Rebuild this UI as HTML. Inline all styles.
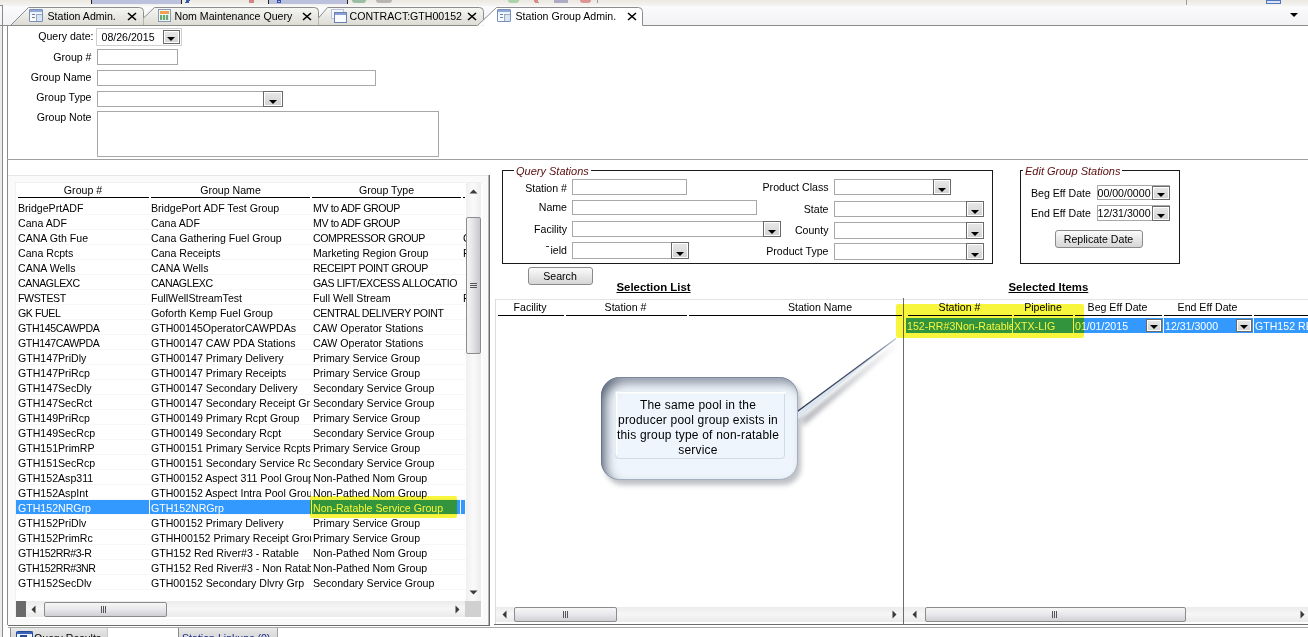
<!DOCTYPE html>
<html><head><meta charset="utf-8"><style>
html,body{margin:0;padding:0;width:1308px;height:637px;overflow:hidden;background:#ffffff;position:relative}
body div{position:absolute;box-sizing:content-box}
.t{font-family:"Liberation Sans",sans-serif;line-height:20px;white-space:nowrap;color:#000}
.inp{border:1px solid #a8a8a8;background:#fff}
.ddb{border:1px solid #6a6a6a;background:linear-gradient(#e8e8e8,#d2d2d2);box-shadow:inset 0 0 0 1px #fff}
.ddb i{position:absolute;width:0;height:0;border-left:4px solid transparent;border-right:4px solid transparent;border-top:4px solid #000}
.btn{border:1px solid #8a8a8a;border-radius:3px;background:linear-gradient(#fbfbfb,#e4e4e4 60%,#d6d6d6)}
</style></head><body>
<div style="left:0px;top:0px;width:1308px;height:6px;background:linear-gradient(#ebe8e1,#f6f5f2)"></div>
<div style="left:91px;top:0px;width:91px;height:4px;background:#bcc2de;border-left:1px solid #222;border-right:1px solid #222;box-sizing:border-box"></div>
<div style="left:184px;top:0px;width:7px;height:3px;background:linear-gradient(120deg,transparent 30%,#3a5cb0 30% 70%,transparent 70%)"></div>
<div style="left:249px;top:0px;width:5px;height:3px;background:#c03030;opacity:.8;opacity:.55"></div>
<div style="left:268px;top:0px;width:80px;height:4px;background:#bcc2de;border-left:1px solid #222;border-right:1px solid #222;box-sizing:border-box"></div>
<div style="left:277px;top:0px;width:4px;height:3px;border:1px solid #3050b0;box-sizing:border-box"></div>
<div style="left:352px;top:0px;width:14px;height:3px;background:#5a9a70;border-radius:0 0 3px 3px;opacity:.55"></div>
<div style="left:376px;top:0px;width:16px;height:3px;background:#8a8a8a;border-radius:0 0 4px 4px;opacity:.55"></div>
<div style="left:508px;top:0px;width:11px;height:3px;background:#7ac07a;border-radius:0 0 6px 6px;opacity:.55"></div>
<div style="left:531px;top:0px;width:12px;height:3px;background:linear-gradient(60deg,transparent 30%,#c04040 30% 60%,transparent 60%);opacity:.55"></div>
<div style="left:554px;top:0px;width:14px;height:3px;background:#7878a8;opacity:.55"></div>
<div style="left:580px;top:0px;width:11px;height:3px;background:#d05050;border-radius:0 0 6px 6px;opacity:.55"></div>
<div style="left:597px;top:0px;width:1px;height:3px;background:#999"></div>
<div style="left:1186px;top:0px;width:1px;height:5px;background:#999"></div>
<div style="left:1266px;top:0px;width:15px;height:4px;border:1px solid #5078c0;box-sizing:border-box;background:#d8e4f4"></div>
<div style="left:0px;top:26px;width:2px;height:611px;background:#ececec"></div>
<div style="left:0px;top:6px;width:1308px;height:19px;background:linear-gradient(#fbfbfc,#f2f2f6)"></div>
<div style="left:0px;top:5px;width:3px;height:1px;background:#8a8a8a"></div>
<div style="left:2px;top:5px;width:1px;height:632px;background:#8a8a8a"></div>
<svg style="position:absolute;left:0;top:0" width="1308" height="30">
<defs><linearGradient id="tg" x1="0" y1="0" x2="0" y2="1"><stop offset="0" stop-color="#f6f6f4"/><stop offset="1" stop-color="#dcdbd3"/></linearGradient></defs>
<path d="M10.5 25.5 L28.5 7.5 L139.5 7.5 Q143.5 7.5 143.5 11.5 L143.5 25.5" fill="url(#tg)" stroke="#8c8c8c" stroke-width="1"/>
<path d="M143.5 18 L154.5 7.5 L314.5 7.5 Q318.5 7.5 318.5 11.5 L318.5 25.5 L143.5 25.5 Z" fill="url(#tg)" stroke="none"/>
<path d="M143.5 18 L154.5 7.5 L314.5 7.5 Q318.5 7.5 318.5 11.5 L318.5 25.5" fill="none" stroke="#8c8c8c" stroke-width="1"/>
<path d="M318.5 18 L327.5 7.5 L479.5 7.5 Q483.5 7.5 483.5 11.5 L483.5 25.5 L318.5 25.5 Z" fill="url(#tg)" stroke="none"/>
<path d="M318.5 18 L327.5 7.5 L479.5 7.5 Q483.5 7.5 483.5 11.5 L483.5 25.5" fill="none" stroke="#8c8c8c" stroke-width="1"/>
<path d="M477.5 25.5 L496.5 7.5 L638.5 7.5 Q642.5 7.5 642.5 11.5 L642.5 25.5 Z" fill="#ffffff" stroke="none"/>
<path d="M0 25.5 L477.5 25.5 L496.5 7.5 L638.5 7.5 Q642.5 7.5 642.5 11.5 L642.5 25.5 L1308 25.5" fill="none" stroke="#8c8c8c" stroke-width="1"/>
<path d="M1290 13 L1298 13 L1294 17 Z" fill="#000"/>
</svg>
<div style="left:0px;top:25px;width:7px;height:1px;background:transparent"></div>
<div style="left:29px;top:9px;width:12px;height:11px;border:1px solid #7a8fb8;background:linear-gradient(#e8f0fb,#ffffff);border-radius:1px"><div style="left:0;top:0;width:12px;height:2px;background:#8fa8d8"></div><div style="left:2px;top:4px;width:3px;height:1px;background:#6a7ea8"></div><div style="left:2px;top:7px;width:3px;height:1px;background:#6a7ea8"></div><div style="left:6px;top:4px;width:5px;height:6px;border-left:1px solid #9ab;border-top:1px solid #9ab;background:#d8e4f4"></div></div>
<div class="t" style="left:47.5px;top:6px;font-size:10.6px;">Station Admin.</div>
<svg style="position:absolute;left:127px;top:12px" width="10" height="9"><path d="M1 1 L9 8 M9 1 L1 8" stroke="#000" stroke-width="1.6"/></svg>
<div style="left:158px;top:9px;width:11px;height:11px;border:1px solid #8a9ab0;background:#eef6f8"><div style="left:1px;top:1px;width:9px;height:3px;background:#f0a050"></div><div style="left:1px;top:5px;width:9px;height:5px;background:repeating-linear-gradient(90deg,#6aa870 0 2px,#cfe8e0 2px 3px)"></div></div>
<div class="t" style="left:174.5px;top:6px;font-size:10.6px;">Nom Maintenance Query</div>
<svg style="position:absolute;left:302px;top:12px" width="10" height="9"><path d="M1 1 L9 8 M9 1 L1 8" stroke="#000" stroke-width="1.6"/></svg>
<div style="left:331px;top:9px;width:11px;height:8px;border:1px solid #b8c4dc;background:#f4f8fc"></div>
<div style="left:334px;top:12px;width:11px;height:9px;border:1px solid #6a80b0;background:#f8fbff"><div style="left:0;top:0;width:11px;height:2px;background:#8aa0d8"></div></div>
<div class="t" style="left:349.5px;top:6px;font-size:10.6px;">CONTRACT:GTH00152</div>
<svg style="position:absolute;left:467px;top:12px" width="10" height="9"><path d="M1 1 L9 8 M9 1 L1 8" stroke="#000" stroke-width="1.6"/></svg>
<div style="left:497px;top:9px;width:12px;height:11px;border:1px solid #7a8fb8;background:linear-gradient(#e8f0fb,#ffffff);border-radius:1px"><div style="left:0;top:0;width:12px;height:2px;background:#8fa8d8"></div><div style="left:2px;top:4px;width:3px;height:1px;background:#6a7ea8"></div><div style="left:2px;top:7px;width:3px;height:1px;background:#6a7ea8"></div><div style="left:6px;top:4px;width:5px;height:6px;border-left:1px solid #9ab;border-top:1px solid #9ab;background:#d8e4f4"></div></div>
<div class="t" style="left:515.5px;top:6px;font-size:10.6px;">Station Group Admin.</div>
<svg style="position:absolute;left:627px;top:12px" width="10" height="9"><path d="M1 1 L9 8 M9 1 L1 8" stroke="#000" stroke-width="1.6"/></svg>
<div style="left:7px;top:25px;width:1px;height:600px;background:#8c8c8c"></div>
<div style="left:7px;top:159px;width:1301px;height:1px;background:#a0a0a0"></div>
<div style="left:8px;top:175px;width:480px;height:1px;background:#e6e6e6"></div>
<div class="t" style="right:1214.5px;top:26px;font-size:10.6px;">Query date:</div>
<div class="t" style="right:1216.5px;top:47px;font-size:10.6px;">Group #</div>
<div class="t" style="right:1216.5px;top:67px;font-size:10.6px;">Group Name</div>
<div class="t" style="right:1216.5px;top:87px;font-size:10.6px;">Group Type</div>
<div class="t" style="right:1216.5px;top:107px;font-size:10.6px;">Group Note</div>
<div class="inp" style="left:96px;top:28px;width:84px;height:16px;border-color:#d0d0d0"></div>
<div class="t" style="left:101.5px;top:27px;font-size:10.6px;">08/26/2015</div>
<div class="ddb" style="left:163px;top:30px;width:15px;height:12px;"><i style="left:3px;top:6px"></i></div>
<div class="inp" style="left:97px;top:49px;width:79px;height:14px;"></div>
<div class="inp" style="left:97px;top:70px;width:277px;height:14px;"></div>
<div class="inp" style="left:97px;top:91px;width:184px;height:14px;"></div>
<div class="ddb" style="left:263px;top:91px;width:18px;height:14px;"><i style="left:5px;top:8px"></i></div>
<div class="inp" style="left:97px;top:111px;width:340px;height:44px;"></div>
<div style="left:8px;top:176px;width:481px;height:449px;background:#fafafa"></div>
<div style="left:488px;top:175px;width:1px;height:451px;background:#b4b4b4"></div>
<div style="left:489px;top:175px;width:1px;height:451px;background:#6c6c6c"></div>
<div style="left:8px;top:625px;width:482px;height:1px;background:#6c6c6c"></div>
<div style="left:15px;top:182px;width:467px;height:436px;background:#ffffff;border-left:1px solid #f0f0f0;border-top:1px solid #f0f0f0"></div>
<div class="t" style="left:-217px;width:600px;text-align:center;top:180px;font-size:10.6px;">Group #</div>
<div class="t" style="left:-69.5px;width:600px;text-align:center;top:180px;font-size:10.6px;">Group Name</div>
<div class="t" style="left:86.5px;width:600px;text-align:center;top:180px;font-size:10.6px;">Group Type</div>
<div style="left:18px;top:197px;width:131px;height:1px;background:#000"></div>
<div style="left:151px;top:197px;width:159px;height:1px;background:#000"></div>
<div style="left:312px;top:197px;width:149px;height:1px;background:#000"></div>
<div style="left:463px;top:197px;width:2px;height:1px;background:#000"></div>
<div style="left:16px;top:214px;width:450px;height:1px;background:#f7f7f7"></div>
<div class="t" style="left:18px;top:198px;width:131px;overflow:hidden;font-size:10.6px;color:#000">BridgePrtADF</div>
<div class="t" style="left:151px;top:198px;width:160px;overflow:hidden;font-size:10.6px;color:#000">BridgePort ADF Test Group</div>
<div class="t" style="left:313px;top:198px;width:149px;overflow:hidden;font-size:10.6px;color:#000;letter-spacing:-0.4px">MV to ADF GROUP</div>
<div class="t" style="left:463px;top:198px;width:4px;overflow:hidden;font-size:10.6px;color:#000"></div>
<div style="left:16px;top:229px;width:450px;height:1px;background:#f7f7f7"></div>
<div class="t" style="left:18px;top:213px;width:131px;overflow:hidden;font-size:10.6px;color:#000">Cana ADF</div>
<div class="t" style="left:151px;top:213px;width:160px;overflow:hidden;font-size:10.6px;color:#000">Cana ADF</div>
<div class="t" style="left:313px;top:213px;width:149px;overflow:hidden;font-size:10.6px;color:#000;letter-spacing:-0.4px">MV to ADF GROUP</div>
<div class="t" style="left:463px;top:213px;width:4px;overflow:hidden;font-size:10.6px;color:#000"></div>
<div style="left:16px;top:244px;width:450px;height:1px;background:#f7f7f7"></div>
<div class="t" style="left:18px;top:228px;width:131px;overflow:hidden;font-size:10.6px;color:#000">CANA Gth Fue</div>
<div class="t" style="left:151px;top:228px;width:160px;overflow:hidden;font-size:10.6px;color:#000">Cana Gathering Fuel Group</div>
<div class="t" style="left:313px;top:228px;width:149px;overflow:hidden;font-size:10.6px;color:#000;letter-spacing:-0.4px">COMPRESSOR GROUP</div>
<div class="t" style="left:463px;top:228px;width:4px;overflow:hidden;font-size:10.6px;color:#000">C</div>
<div style="left:16px;top:259px;width:450px;height:1px;background:#f7f7f7"></div>
<div class="t" style="left:18px;top:243px;width:131px;overflow:hidden;font-size:10.6px;color:#000">Cana Rcpts</div>
<div class="t" style="left:151px;top:243px;width:160px;overflow:hidden;font-size:10.6px;color:#000">Cana Receipts</div>
<div class="t" style="left:313px;top:243px;width:149px;overflow:hidden;font-size:10.6px;color:#000">Marketing Region Group</div>
<div class="t" style="left:463px;top:243px;width:4px;overflow:hidden;font-size:10.6px;color:#000">F</div>
<div style="left:16px;top:274px;width:450px;height:1px;background:#f7f7f7"></div>
<div class="t" style="left:18px;top:258px;width:131px;overflow:hidden;font-size:10.6px;color:#000">CANA Wells</div>
<div class="t" style="left:151px;top:258px;width:160px;overflow:hidden;font-size:10.6px;color:#000">CANA Wells</div>
<div class="t" style="left:313px;top:258px;width:149px;overflow:hidden;font-size:10.6px;color:#000;letter-spacing:-0.4px">RECEIPT POINT GROUP</div>
<div class="t" style="left:463px;top:258px;width:4px;overflow:hidden;font-size:10.6px;color:#000"></div>
<div style="left:16px;top:289px;width:450px;height:1px;background:#f7f7f7"></div>
<div class="t" style="left:18px;top:273px;width:131px;overflow:hidden;font-size:10.6px;color:#000;letter-spacing:-0.4px">CANAGLEXC</div>
<div class="t" style="left:151px;top:273px;width:160px;overflow:hidden;font-size:10.6px;color:#000;letter-spacing:-0.4px">CANAGLEXC</div>
<div class="t" style="left:313px;top:273px;width:149px;overflow:hidden;font-size:10.6px;color:#000;letter-spacing:-0.4px">GAS LIFT/EXCESS ALLOCATIO</div>
<div class="t" style="left:463px;top:273px;width:4px;overflow:hidden;font-size:10.6px;color:#000"></div>
<div style="left:16px;top:304px;width:450px;height:1px;background:#f7f7f7"></div>
<div class="t" style="left:18px;top:288px;width:131px;overflow:hidden;font-size:10.6px;color:#000;letter-spacing:-0.4px">FWSTEST</div>
<div class="t" style="left:151px;top:288px;width:160px;overflow:hidden;font-size:10.6px;color:#000">FullWellStreamTest</div>
<div class="t" style="left:313px;top:288px;width:149px;overflow:hidden;font-size:10.6px;color:#000">Full Well Stream</div>
<div class="t" style="left:463px;top:288px;width:4px;overflow:hidden;font-size:10.6px;color:#000">F</div>
<div style="left:16px;top:319px;width:450px;height:1px;background:#f7f7f7"></div>
<div class="t" style="left:18px;top:303px;width:131px;overflow:hidden;font-size:10.6px;color:#000;letter-spacing:-0.4px">GK FUEL</div>
<div class="t" style="left:151px;top:303px;width:160px;overflow:hidden;font-size:10.6px;color:#000">Goforth Kemp Fuel Group</div>
<div class="t" style="left:313px;top:303px;width:149px;overflow:hidden;font-size:10.6px;color:#000;letter-spacing:-0.4px">CENTRAL DELIVERY POINT</div>
<div class="t" style="left:463px;top:303px;width:4px;overflow:hidden;font-size:10.6px;color:#000"></div>
<div style="left:16px;top:334px;width:450px;height:1px;background:#f7f7f7"></div>
<div class="t" style="left:18px;top:318px;width:131px;overflow:hidden;font-size:10.6px;color:#000;letter-spacing:-0.4px">GTH145CAWPDA</div>
<div class="t" style="left:151px;top:318px;width:160px;overflow:hidden;font-size:10.6px;color:#000">GTH00145OperatorCAWPDAs</div>
<div class="t" style="left:313px;top:318px;width:149px;overflow:hidden;font-size:10.6px;color:#000">CAW Operator Stations</div>
<div class="t" style="left:463px;top:318px;width:4px;overflow:hidden;font-size:10.6px;color:#000"></div>
<div style="left:16px;top:349px;width:450px;height:1px;background:#f7f7f7"></div>
<div class="t" style="left:18px;top:333px;width:131px;overflow:hidden;font-size:10.6px;color:#000;letter-spacing:-0.4px">GTH147CAWPDA</div>
<div class="t" style="left:151px;top:333px;width:160px;overflow:hidden;font-size:10.6px;color:#000">GTH00147 CAW PDA Stations</div>
<div class="t" style="left:313px;top:333px;width:149px;overflow:hidden;font-size:10.6px;color:#000">CAW Operator Stations</div>
<div class="t" style="left:463px;top:333px;width:4px;overflow:hidden;font-size:10.6px;color:#000"></div>
<div style="left:16px;top:364px;width:450px;height:1px;background:#f7f7f7"></div>
<div class="t" style="left:18px;top:348px;width:131px;overflow:hidden;font-size:10.6px;color:#000">GTH147PriDly</div>
<div class="t" style="left:151px;top:348px;width:160px;overflow:hidden;font-size:10.6px;color:#000">GTH00147 Primary Delivery</div>
<div class="t" style="left:313px;top:348px;width:149px;overflow:hidden;font-size:10.6px;color:#000">Primary Service Group</div>
<div class="t" style="left:463px;top:348px;width:4px;overflow:hidden;font-size:10.6px;color:#000"></div>
<div style="left:16px;top:379px;width:450px;height:1px;background:#f7f7f7"></div>
<div class="t" style="left:18px;top:363px;width:131px;overflow:hidden;font-size:10.6px;color:#000">GTH147PriRcp</div>
<div class="t" style="left:151px;top:363px;width:160px;overflow:hidden;font-size:10.6px;color:#000">GTH00147 Primary Receipts</div>
<div class="t" style="left:313px;top:363px;width:149px;overflow:hidden;font-size:10.6px;color:#000">Primary Service Group</div>
<div class="t" style="left:463px;top:363px;width:4px;overflow:hidden;font-size:10.6px;color:#000"></div>
<div style="left:16px;top:394px;width:450px;height:1px;background:#f7f7f7"></div>
<div class="t" style="left:18px;top:378px;width:131px;overflow:hidden;font-size:10.6px;color:#000">GTH147SecDly</div>
<div class="t" style="left:151px;top:378px;width:160px;overflow:hidden;font-size:10.6px;color:#000">GTH00147 Secondary Delivery</div>
<div class="t" style="left:313px;top:378px;width:149px;overflow:hidden;font-size:10.6px;color:#000">Secondary Service Group</div>
<div class="t" style="left:463px;top:378px;width:4px;overflow:hidden;font-size:10.6px;color:#000"></div>
<div style="left:16px;top:409px;width:450px;height:1px;background:#f7f7f7"></div>
<div class="t" style="left:18px;top:393px;width:131px;overflow:hidden;font-size:10.6px;color:#000">GTH147SecRct</div>
<div class="t" style="left:151px;top:393px;width:160px;overflow:hidden;font-size:10.6px;color:#000">GTH00147 Secondary Receipt Gr</div>
<div class="t" style="left:313px;top:393px;width:149px;overflow:hidden;font-size:10.6px;color:#000">Secondary Service Group</div>
<div class="t" style="left:463px;top:393px;width:4px;overflow:hidden;font-size:10.6px;color:#000"></div>
<div style="left:16px;top:424px;width:450px;height:1px;background:#f7f7f7"></div>
<div class="t" style="left:18px;top:408px;width:131px;overflow:hidden;font-size:10.6px;color:#000">GTH149PriRcp</div>
<div class="t" style="left:151px;top:408px;width:160px;overflow:hidden;font-size:10.6px;color:#000">GTH00149 Primary Rcpt Group</div>
<div class="t" style="left:313px;top:408px;width:149px;overflow:hidden;font-size:10.6px;color:#000">Primary Service Group</div>
<div class="t" style="left:463px;top:408px;width:4px;overflow:hidden;font-size:10.6px;color:#000"></div>
<div style="left:16px;top:439px;width:450px;height:1px;background:#f7f7f7"></div>
<div class="t" style="left:18px;top:423px;width:131px;overflow:hidden;font-size:10.6px;color:#000">GTH149SecRcp</div>
<div class="t" style="left:151px;top:423px;width:160px;overflow:hidden;font-size:10.6px;color:#000">GTH00149 Secondary Rcpt</div>
<div class="t" style="left:313px;top:423px;width:149px;overflow:hidden;font-size:10.6px;color:#000">Secondary Service Group</div>
<div class="t" style="left:463px;top:423px;width:4px;overflow:hidden;font-size:10.6px;color:#000"></div>
<div style="left:16px;top:454px;width:450px;height:1px;background:#f7f7f7"></div>
<div class="t" style="left:18px;top:438px;width:131px;overflow:hidden;font-size:10.6px;color:#000">GTH151PrimRP</div>
<div class="t" style="left:151px;top:438px;width:160px;overflow:hidden;font-size:10.6px;color:#000">GTH00151 Primary Service Rcpts</div>
<div class="t" style="left:313px;top:438px;width:149px;overflow:hidden;font-size:10.6px;color:#000">Primary Service Group</div>
<div class="t" style="left:463px;top:438px;width:4px;overflow:hidden;font-size:10.6px;color:#000"></div>
<div style="left:16px;top:469px;width:450px;height:1px;background:#f7f7f7"></div>
<div class="t" style="left:18px;top:453px;width:131px;overflow:hidden;font-size:10.6px;color:#000">GTH151SecRcp</div>
<div class="t" style="left:151px;top:453px;width:160px;overflow:hidden;font-size:10.6px;color:#000">GTH00151 Secondary Service Rc</div>
<div class="t" style="left:313px;top:453px;width:149px;overflow:hidden;font-size:10.6px;color:#000">Secondary Service Group</div>
<div class="t" style="left:463px;top:453px;width:4px;overflow:hidden;font-size:10.6px;color:#000"></div>
<div style="left:16px;top:484px;width:450px;height:1px;background:#f7f7f7"></div>
<div class="t" style="left:18px;top:468px;width:131px;overflow:hidden;font-size:10.6px;color:#000">GTH152Asp311</div>
<div class="t" style="left:151px;top:468px;width:160px;overflow:hidden;font-size:10.6px;color:#000">GTH00152 Aspect 311 Pool Group</div>
<div class="t" style="left:313px;top:468px;width:149px;overflow:hidden;font-size:10.6px;color:#000">Non-Pathed Nom Group</div>
<div class="t" style="left:463px;top:468px;width:4px;overflow:hidden;font-size:10.6px;color:#000"></div>
<div style="left:16px;top:499px;width:450px;height:1px;background:#f7f7f7"></div>
<div class="t" style="left:18px;top:483px;width:131px;overflow:hidden;font-size:10.6px;color:#000">GTH152AspInt</div>
<div class="t" style="left:151px;top:483px;width:160px;overflow:hidden;font-size:10.6px;color:#000">GTH00152 Aspect Intra Pool Grou</div>
<div class="t" style="left:313px;top:483px;width:149px;overflow:hidden;font-size:10.6px;color:#000">Non-Pathed Nom Group</div>
<div class="t" style="left:463px;top:483px;width:4px;overflow:hidden;font-size:10.6px;color:#000"></div>
<div style="left:16px;top:514px;width:450px;height:1px;background:#f7f7f7"></div>
<div style="left:16px;top:500px;width:133px;height:14px;background:#3399ff"></div>
<div style="left:150px;top:500px;width:161px;height:14px;background:#3399ff"></div>
<div style="left:312px;top:500px;width:148px;height:14px;background:#3399ff"></div>
<div style="left:461px;top:500px;width:4px;height:14px;background:#3399ff"></div>
<div class="t" style="left:18px;top:498px;width:131px;overflow:hidden;font-size:10.6px;color:#ffffff">GTH152NRGrp</div>
<div class="t" style="left:151px;top:498px;width:160px;overflow:hidden;font-size:10.6px;color:#ffffff">GTH152NRGrp</div>
<div class="t" style="left:313px;top:498px;width:149px;overflow:hidden;font-size:10.6px;color:#ffffff">Non-Ratable Service Group</div>
<div class="t" style="left:463px;top:498px;width:4px;overflow:hidden;font-size:10.6px;color:#ffffff"></div>
<div style="left:16px;top:529px;width:450px;height:1px;background:#f7f7f7"></div>
<div class="t" style="left:18px;top:513px;width:131px;overflow:hidden;font-size:10.6px;color:#000">GTH152PriDlv</div>
<div class="t" style="left:151px;top:513px;width:160px;overflow:hidden;font-size:10.6px;color:#000">GTH00152 Primary Delivery</div>
<div class="t" style="left:313px;top:513px;width:149px;overflow:hidden;font-size:10.6px;color:#000">Primary Service Group</div>
<div class="t" style="left:463px;top:513px;width:4px;overflow:hidden;font-size:10.6px;color:#000"></div>
<div style="left:16px;top:544px;width:450px;height:1px;background:#f7f7f7"></div>
<div class="t" style="left:18px;top:528px;width:131px;overflow:hidden;font-size:10.6px;color:#000">GTH152PrimRc</div>
<div class="t" style="left:151px;top:528px;width:160px;overflow:hidden;font-size:10.6px;color:#000">GTHH00152 Primary Receipt Grou</div>
<div class="t" style="left:313px;top:528px;width:149px;overflow:hidden;font-size:10.6px;color:#000">Primary Service Group</div>
<div class="t" style="left:463px;top:528px;width:4px;overflow:hidden;font-size:10.6px;color:#000"></div>
<div style="left:16px;top:559px;width:450px;height:1px;background:#f7f7f7"></div>
<div class="t" style="left:18px;top:543px;width:131px;overflow:hidden;font-size:10.6px;color:#000;letter-spacing:-0.4px">GTH152RR#3-R</div>
<div class="t" style="left:151px;top:543px;width:160px;overflow:hidden;font-size:10.6px;color:#000">GTH152 Red River#3 - Ratable</div>
<div class="t" style="left:313px;top:543px;width:149px;overflow:hidden;font-size:10.6px;color:#000">Non-Pathed Nom Group</div>
<div class="t" style="left:463px;top:543px;width:4px;overflow:hidden;font-size:10.6px;color:#000"></div>
<div style="left:16px;top:574px;width:450px;height:1px;background:#f7f7f7"></div>
<div class="t" style="left:18px;top:558px;width:131px;overflow:hidden;font-size:10.6px;color:#000;letter-spacing:-0.4px">GTH152RR#3NR</div>
<div class="t" style="left:151px;top:558px;width:160px;overflow:hidden;font-size:10.6px;color:#000">GTH152 Red River#3 - Non Ratab</div>
<div class="t" style="left:313px;top:558px;width:149px;overflow:hidden;font-size:10.6px;color:#000">Non-Pathed Nom Group</div>
<div class="t" style="left:463px;top:558px;width:4px;overflow:hidden;font-size:10.6px;color:#000"></div>
<div style="left:16px;top:589px;width:450px;height:1px;background:#f7f7f7"></div>
<div class="t" style="left:18px;top:573px;width:131px;overflow:hidden;font-size:10.6px;color:#000">GTH152SecDlv</div>
<div class="t" style="left:151px;top:573px;width:160px;overflow:hidden;font-size:10.6px;color:#000">GTH00152 Secondary Dlvry Grp</div>
<div class="t" style="left:313px;top:573px;width:149px;overflow:hidden;font-size:10.6px;color:#000">Secondary Service Group</div>
<div class="t" style="left:463px;top:573px;width:4px;overflow:hidden;font-size:10.6px;color:#000"></div>
<div style="left:466px;top:183px;width:15px;height:418px;background:linear-gradient(90deg,#f0f0f0,#fafafa 50%,#ececec)"></div>
<svg style="position:absolute;left:469px;top:189px" width="9" height="5"><path d="M0.5 4.5 L4.5 0.5 L8.5 4.5 Z" fill="#3a3a3a"/></svg>
<svg style="position:absolute;left:469px;top:590px" width="9" height="5"><path d="M0.5 0.5 L4.5 4.5 L8.5 0.5 Z" fill="#3a3a3a"/></svg>
<div style="left:466px;top:217px;width:15px;height:137px;border:1px solid #8c8c8c;box-sizing:border-box;border-radius:2px;background:linear-gradient(90deg,#f4f4f4,#e6e6ea 40%,#c8c8cc)"></div>
<div style="left:470px;top:283px;width:7px;height:1px;background:#555"></div>
<div style="left:470px;top:285px;width:7px;height:1px;background:#555"></div>
<div style="left:470px;top:287px;width:7px;height:1px;background:#555"></div>
<div style="left:16px;top:601px;width:449px;height:16px;background:linear-gradient(#ececec,#f6f6f6 50%,#eaeaea)"></div>
<div style="left:16px;top:601px;width:10px;height:16px;background:#6a6a6a"></div>
<svg style="position:absolute;left:31px;top:605px" width="5" height="9"><path d="M4.5 0.5 L0.5 4.5 L4.5 8.5 Z" fill="#3a3a3a"/></svg>
<svg style="position:absolute;left:455px;top:605px" width="5" height="9"><path d="M0.5 0.5 L4.5 4.5 L0.5 8.5 Z" fill="#3a3a3a"/></svg>
<div style="left:44px;top:602px;width:123px;height:15px;border:1px solid #8c8c8c;box-sizing:border-box;border-radius:2px;background:linear-gradient(#f6f6f6,#e8e8ec 50%,#cfcfd4)"></div>
<div style="left:101px;top:606px;width:1px;height:7px;background:#555"></div>
<div style="left:103px;top:606px;width:1px;height:7px;background:#555"></div>
<div style="left:105px;top:606px;width:1px;height:7px;background:#555"></div>
<div style="left:465px;top:601px;width:16px;height:16px;background:#d0d0d0"></div>
<div style="left:502px;top:170px;width:489px;height:92px;border:1px solid #1a1a1a"></div>
<div class="t" style="left:514px;top:161px;padding:0 2px;background:#fff;font-size:11px;font-style:italic;color:#5a0c0c">Query Stations</div>
<div class="t" style="right:741px;top:178px;font-size:10.6px;">Station #</div>
<div class="t" style="right:741px;top:197px;font-size:10.6px;">Name</div>
<div class="t" style="right:741px;top:219px;font-size:10.6px;">Facility</div>
<div class="t" style="right:741px;top:240px;font-size:10.6px;">Field</div>
<div style="left:544px;top:246px;width:7px;height:9px;background:#fff"></div>
<div style="left:546px;top:246px;width:3px;height:1px;background:#333"></div>
<div class="inp" style="left:572px;top:179px;width:113px;height:14px;"></div>
<div class="inp" style="left:572px;top:200px;width:183px;height:13px;"></div>
<div class="inp" style="left:572px;top:221px;width:207px;height:14px;"></div>
<div class="ddb" style="left:763px;top:221px;width:16px;height:14px;"><i style="left:4px;top:8px"></i></div>
<div class="inp" style="left:572px;top:242px;width:115px;height:15px;"></div>
<div class="ddb" style="left:671px;top:242px;width:16px;height:15px;"><i style="left:4px;top:9px"></i></div>
<div class="t" style="right:479.5px;top:177px;font-size:10.6px;">Product Class</div>
<div class="t" style="right:479.5px;top:199px;font-size:10.6px;">State</div>
<div class="t" style="right:479.5px;top:220px;font-size:10.6px;">County</div>
<div class="t" style="right:479.5px;top:241px;font-size:10.6px;">Product Type</div>
<div class="inp" style="left:834px;top:179px;width:115px;height:14px;"></div>
<div class="ddb" style="left:933px;top:179px;width:16px;height:14px;"><i style="left:4px;top:8px"></i></div>
<div class="inp" style="left:834px;top:201px;width:148px;height:14px;"></div>
<div class="ddb" style="left:966px;top:201px;width:16px;height:14px;"><i style="left:4px;top:8px"></i></div>
<div class="inp" style="left:834px;top:222px;width:148px;height:15px;"></div>
<div class="ddb" style="left:966px;top:222px;width:16px;height:15px;"><i style="left:4px;top:9px"></i></div>
<div class="inp" style="left:834px;top:243px;width:148px;height:15px;"></div>
<div class="ddb" style="left:966px;top:243px;width:16px;height:15px;"><i style="left:4px;top:9px"></i></div>
<div style="left:1020px;top:170px;width:158px;height:92px;border:1px solid #1a1a1a"></div>
<div class="t" style="left:1023px;top:161px;padding:0 2px;background:#fff;font-size:11px;font-style:italic;color:#5a0c0c">Edit Group Stations</div>
<div class="t" style="left:1031px;top:183px;font-size:10.6px;">Beg Eff Date</div>
<div class="t" style="left:1031px;top:203px;font-size:10.6px;">End Eff Date</div>
<div class="inp" style="left:1097px;top:185px;width:71px;height:13px;"></div>
<div class="t" style="left:1097.5px;top:183px;font-size:10.6px;">00/00/0000</div>
<div class="ddb" style="left:1152px;top:186px;width:16px;height:12px;"><i style="left:4px;top:6px"></i></div>
<div class="inp" style="left:1097px;top:205px;width:71px;height:14px;"></div>
<div class="t" style="left:1097.5px;top:203px;font-size:10.6px;">12/31/3000</div>
<div class="ddb" style="left:1152px;top:206px;width:16px;height:13px;"><i style="left:4px;top:7px"></i></div>
<div class="btn" style="left:1055px;top:230px;width:86px;height:16px"></div>
<div class="t" style="left:798.5px;width:600px;text-align:center;top:229px;font-size:10.6px;">Replicate Date</div>
<div class="btn" style="left:528px;top:267px;width:63px;height:16px"></div>
<div class="t" style="left:260px;width:600px;text-align:center;top:266px;font-size:10.6px;">Search</div>
<div class="t" style="left:616.5px;top:277px;font-size:11.4px;font-weight:bold;text-decoration:underline">Selection List</div>
<div class="t" style="left:1008.5px;top:277px;font-size:11.4px;font-weight:bold;text-decoration:underline">Selected Items</div>
<div style="left:495px;top:299px;width:1px;height:326px;background:#dcdcdc"></div>
<div style="left:496px;top:299px;width:812px;height:1px;background:#e4e4e4"></div>
<div class="t" style="left:230px;width:600px;text-align:center;top:297px;font-size:10.6px;">Facility</div>
<div class="t" style="left:325.5px;width:600px;text-align:center;top:297px;font-size:10.6px;">Station #</div>
<div class="t" style="left:520px;width:600px;text-align:center;top:297px;font-size:10.6px;">Station Name</div>
<div style="left:498px;top:315px;width:66px;height:1px;background:#000"></div>
<div style="left:566px;top:315px;width:121px;height:1px;background:#000"></div>
<div style="left:689px;top:315px;width:213px;height:1px;background:#000"></div>
<div style="left:903px;top:298px;width:1px;height:327px;background:#6c6c6c"></div>
<div style="left:903px;top:298px;width:1px;height:327px;background:#6c6c6c"></div>
<div class="t" style="left:659.5px;width:600px;text-align:center;top:297px;font-size:10.6px;">Station #</div>
<div class="t" style="left:743px;width:600px;text-align:center;top:297px;font-size:10.6px;">Pipeline</div>
<div class="t" style="left:817.5px;width:600px;text-align:center;top:297px;font-size:10.6px;">Beg Eff Date</div>
<div class="t" style="left:907.5px;width:600px;text-align:center;top:297px;font-size:10.6px;">End Eff Date</div>
<div style="left:908px;top:315px;width:104px;height:1px;background:#000"></div>
<div style="left:1014px;top:315px;width:59px;height:1px;background:#000"></div>
<div style="left:1075px;top:315px;width:87px;height:1px;background:#000"></div>
<div style="left:1164px;top:315px;width:88px;height:1px;background:#000"></div>
<div style="left:1254px;top:315px;width:54px;height:1px;background:#000"></div>
<div style="left:906px;top:318px;width:106px;height:15px;background:#3399ff"></div>
<div style="left:1013px;top:318px;width:60px;height:15px;background:#3399ff"></div>
<div style="left:1074px;top:318px;width:89px;height:15px;background:#3399ff"></div>
<div style="left:1164px;top:318px;width:89px;height:15px;background:#3399ff"></div>
<div style="left:1254px;top:318px;width:54px;height:15px;background:#3399ff"></div>
<div class="t" style="left:907px;top:316px;width:105px;overflow:hidden;font-size:10.6px;color:#fff">152-RR#3Non-Ratable</div>
<div class="t" style="left:1014px;top:316px;width:58px;overflow:hidden;font-size:10.6px;color:#fff">XTX-LIG</div>
<div class="t" style="left:1075px;top:316px;width:80px;overflow:hidden;font-size:10.6px;color:#fff">01/01/2015</div>
<div class="t" style="left:1165px;top:316px;width:80px;overflow:hidden;font-size:10.6px;color:#fff">12/31/3000</div>
<div class="t" style="left:1255px;top:316px;width:53px;overflow:hidden;font-size:10.6px;color:#fff">GTH152 RE</div>
<div class="ddb" style="left:1146px;top:319px;width:14px;height:11px;"><i style="left:3px;top:5px"></i></div>
<div class="ddb" style="left:1236px;top:319px;width:14px;height:11px;"><i style="left:3px;top:5px"></i></div>
<div style="left:496px;top:607px;width:407px;height:15px;background:linear-gradient(#ececec,#f6f6f6 50%,#eaeaea)"></div>
<svg style="position:absolute;left:502px;top:610px" width="5" height="9"><path d="M4.5 0.5 L0.5 4.5 L4.5 8.5 Z" fill="#3a3a3a"/></svg>
<svg style="position:absolute;left:892px;top:610px" width="5" height="9"><path d="M0.5 0.5 L4.5 4.5 L0.5 8.5 Z" fill="#3a3a3a"/></svg>
<div style="left:514px;top:607px;width:103px;height:15px;border:1px solid #8c8c8c;box-sizing:border-box;border-radius:2px;background:linear-gradient(#f6f6f6,#e8e8ec 50%,#cfcfd4)"></div>
<div style="left:563px;top:611px;width:1px;height:7px;background:#555"></div>
<div style="left:565px;top:611px;width:1px;height:7px;background:#555"></div>
<div style="left:567px;top:611px;width:1px;height:7px;background:#555"></div>
<div style="left:904px;top:607px;width:404px;height:15px;background:linear-gradient(#ececec,#f6f6f6 50%,#eaeaea)"></div>
<svg style="position:absolute;left:912px;top:610px" width="5" height="9"><path d="M4.5 0.5 L0.5 4.5 L4.5 8.5 Z" fill="#3a3a3a"/></svg>
<svg style="position:absolute;left:1300px;top:610px" width="5" height="9"><path d="M0.5 0.5 L4.5 4.5 L0.5 8.5 Z" fill="#3a3a3a"/></svg>
<div style="left:925px;top:607px;width:261px;height:15px;border:1px solid #8c8c8c;box-sizing:border-box;border-radius:2px;background:linear-gradient(#f6f6f6,#e8e8ec 50%,#cfcfd4)"></div>
<div style="left:1052px;top:611px;width:1px;height:7px;background:#555"></div>
<div style="left:1054px;top:611px;width:1px;height:7px;background:#555"></div>
<div style="left:1056px;top:611px;width:1px;height:7px;background:#555"></div>
<div style="left:494px;top:624px;width:814px;height:1px;background:#6c6c6c"></div>
<div style="left:8px;top:627px;width:1300px;height:1px;background:#a8a8a8"></div>
<svg style="position:absolute;left:590px;top:330px" width="320" height="160">
<defs>
<filter id="sh" x="-30%" y="-30%" width="160%" height="160%"><feGaussianBlur stdDeviation="2.6"/></filter>
<filter id="bev" x="-10%" y="-10%" width="120%" height="120%">
  <feFlood flood-color="#56647c" result="c"/>
  <feComposite in="c" in2="SourceAlpha" operator="out" result="inv"/>
  <feOffset in="inv" dx="6" dy="6" result="off"/>
  <feGaussianBlur in="off" stdDeviation="5.5" result="blur"/>
  <feComposite in="blur" in2="SourceAlpha" operator="in" result="ish"/>
  <feMerge><feMergeNode in="SourceGraphic"/><feMergeNode in="ish"/></feMerge>
</filter>
<linearGradient id="pg" x1="0" y1="0" x2="1" y2="0"><stop offset="0" stop-color="#2c3850"/><stop offset="0.7" stop-color="#4a5670"/><stop offset="1" stop-color="#c0c8d8"/></linearGradient>
</defs>
<path d="M212 88 L309 12 L213 96 Z" fill="#7a7f88" opacity="0.6" filter="url(#sh)"/>
<rect x="15" y="52" width="196" height="103" rx="18" fill="#70767e" opacity="0.45" filter="url(#sh)"/>
<path d="M206 82 L306 8.5 L207 90 Z" fill="#dde5ee"/>
<path d="M206 82.5 L306 8.5" stroke="url(#pg)" stroke-width="1.4" fill="none"/>
<rect x="11.5" y="47.5" width="196" height="102" rx="18" fill="#eef5fc" stroke="#aab6c6" stroke-width="1" filter="url(#bev)"/>
<rect x="25.5" y="61.5" width="169" height="67" rx="3" fill="none" stroke="#c8d4e2" stroke-width="1" opacity="0.8"/>
<path d="M26.5 125 L26.5 62.5 L196 62.5" fill="none" stroke="#ffffff" stroke-width="2" opacity="0.95"/>
</svg>
<div class="t" style="left:398px;width:600px;text-align:center;top:395px;font-size:12px;letter-spacing:0.2px">The same pool in the</div>
<div class="t" style="left:398px;width:600px;text-align:center;top:410px;font-size:12px;letter-spacing:0.2px">producer pool group exists in</div>
<div class="t" style="left:398px;width:600px;text-align:center;top:425px;font-size:12px;letter-spacing:0.2px">this group type of non-ratable</div>
<div class="t" style="left:398px;width:600px;text-align:center;top:440px;font-size:12px;letter-spacing:0.2px">service</div>
<div style="left:10px;top:628px;width:1px;height:9px;background:#8a8a8a"></div>
<div style="left:11px;top:628px;width:96px;height:9px;background:linear-gradient(#e8e8e8,#d8d8d8)"></div>
<div style="left:16px;top:631px;width:15px;height:6px;border:1px solid #204a9a;border-bottom:none;border-radius:2px 2px 0 0;background:linear-gradient(#3a62b8 0 2px,#f0f4fa 2px)"></div>
<div style="left:20px;top:635px;width:7px;height:2px;background:#2a4a90"></div>
<div class="t" style="left:34px;top:628px;font-size:10.6px;">Query Results</div>
<div style="left:107px;top:628px;width:1px;height:9px;background:#c8c8c8"></div>
<div style="left:178px;top:628px;width:1px;height:9px;background:#8a8a8a"></div>
<div style="left:179px;top:628px;width:98px;height:9px;background:linear-gradient(#e8e8e8,#d8d8d8)"></div>
<div class="t" style="left:182px;top:628px;font-size:10.6px;color:#1a2a80">Station Linkups (0)</div>
<div style="left:277px;top:628px;width:1px;height:9px;background:#a0a0a0"></div>
<div style="left:310px;top:496px;width:147px;height:22px;background:#f8f63c;mix-blend-mode:multiply;border-radius:2px"></div>
<div style="left:896px;top:304px;width:188px;height:34px;background:#f8f63c;mix-blend-mode:multiply;border-radius:2px"></div>
</body></html>
